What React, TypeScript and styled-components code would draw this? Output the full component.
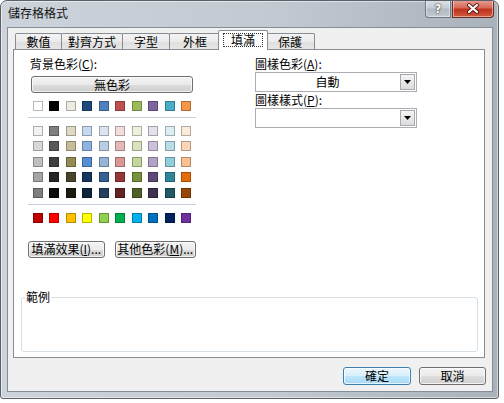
import React from "react";
import styled, { createGlobalStyle, css } from "styled-components";

const FONT = `"Noto Sans CJK TC", "Noto Sans", sans-serif`;

const GlobalStyle = createGlobalStyle`
  html, body { margin: 0; padding: 0; background: #fff; }
  body { font-family: ${FONT}; font-size: 12px; color: #000; }
  * { box-sizing: border-box; }
`;

const Window = styled.div`
  width: 499px;
  height: 399px;
  border: 1px solid #5b6168;
  border-radius: 7px 7px 3px 3px;
  background: linear-gradient(to right, #cdd3da 0%, #c2c9d1 55%, #a9b1ba 100%);
  box-shadow: inset 0 0 0 1px rgba(255, 255, 255, 0.5);
  display: flex;
  flex-direction: column;
  overflow: hidden;
`;

const TitleBar = styled.div`
  height: 26px;
  display: flex;
  align-items: flex-start;
  padding-left: 7px;
  padding-right: 4px;
`;

const Title = styled.div`
  line-height: 16px;
  padding-top: 4px;
  font-size: 12px;
  color: #111;
`;

const CaptionGroup = styled.div`
  margin-left: auto;
  margin-top: -1px;
  display: flex;
  gap: 1px;
`;

const CaptionBtn = styled.div<{ $w: number; $close?: boolean }>`
  width: ${(p) => p.$w}px;
  height: 18px;
  display: flex;
  align-items: center;
  justify-content: center;
  border: 1px solid ${(p) => (p.$close ? "#6d2a22" : "#6f7882")};
  border-top: none;
  border-radius: ${(p) => (p.$close ? "0 0 4px 0" : "0 0 0 4px")};
  background: ${(p) =>
    p.$close
      ? "linear-gradient(#e8a195 0%, #d66a58 45%, #c0331d 55%, #cf5a40 100%)"
      : "linear-gradient(#dfe3e8 0%, #c7cdd4 45%, #b1b9c2 55%, #c3c9d0 100%)"};
  box-shadow: inset 0 0 0 1px rgba(255, 255, 255, 0.45);
  color: #fff;
  font: bold 12px "DejaVu Sans", sans-serif;
  text-shadow: 0 0 2px #333, 0 0 1px #333;
`;

const Client = styled.div`
  flex: 1;
  margin: 0 5px 6px 6px;
  border: 1px solid #858d96;
  background: #f0f0f0;
  display: flex;
  flex-direction: column;
`;

const TabStrip = styled.div`
  height: 21px;
  display: flex;
  align-items: flex-end;
  padding-left: 7px;
`;

const Tab = styled.div<{ $w: number; $active?: boolean }>`
  position: relative;
  width: ${(p) => p.$w}px;
  height: 16px;
  margin-left: -1px;
  display: flex;
  align-items: center;
  justify-content: center;
  border: 1px solid #898c95;
  border-bottom: none;
  border-radius: 2px 2px 0 0;
  background: linear-gradient(#f3f3f3 0%, #ebebeb 50%, #dedede 51%, #e6e6e6 100%);
  line-height: 14px;
  &:first-child {
    margin-left: 0;
  }
  ${(p) =>
    p.$active &&
    css`
      z-index: 2;
      height: 20px;
      margin: 0 -2px -1px -3px;
      background: #fff;
      padding-bottom: 1px;
    `}
`;

const FocusLabel = styled.span`
  border: 1px dotted #333;
  padding: 0 7px;
  line-height: 12px;
`;

const Panel = styled.div`
  height: 309px;
  margin: 0 7px 0 5px;
  border: 1px solid #898c95;
  background: #fff;
  display: flex;
  flex-direction: column;
  padding: 6px 0 5px 0;
`;

const PanelTop = styled.div`
  display: flex;
  padding-left: 14px;
`;

const LeftCol = styled.div`
  width: 168px;
  display: flex;
  flex-direction: column;
`;

const RightCol = styled.div`
  width: 162px;
  margin-left: 59px;
  display: flex;
  flex-direction: column;
`;

const FieldLabel = styled.div<{ $indent?: number }>`
  line-height: 16px;
  height: 16px;
  padding-left: ${(p) => p.$indent ?? 0}px;
  white-space: nowrap;
`;

const PushButton = styled.div<{ $w: number; $ml?: number; $mt?: number }>`
  width: ${(p) => p.$w}px;
  height: 17px;
  margin-left: ${(p) => p.$ml ?? 0}px;
  margin-top: ${(p) => p.$mt ?? 0}px;
  border: 1px solid #707070;
  border-radius: 3px;
  background: linear-gradient(#f2f2f2 0%, #ebebeb 50%, #dddddd 51%, #cfcfcf 100%);
  box-shadow: inset 0 0 0 1px rgba(255, 255, 255, 0.7);
  display: flex;
  align-items: center;
  justify-content: center;
  line-height: 14px;
  white-space: nowrap;
`;

const SwatchGrid = styled.div<{ $mt: number }>`
  display: grid;
  grid-template-columns: repeat(10, 10px);
  column-gap: 6.44px;
  row-gap: 5.4px;
  padding-left: 5px;
  margin-top: ${(p) => p.$mt}px;
`;

const Swatch = styled.div<{ $c: string }>`
  width: 10px;
  height: 10px;
  background: ${(p) => p.$c};
  border: 1px solid rgba(0, 0, 0, 0.28);
`;

const Separator = styled.div<{ $mt: number }>`
  height: 1px;
  width: 168px;
  margin-top: ${(p) => p.$mt}px;
  background: #c5d0da;
`;

const ButtonRow = styled.div`
  display: flex;
  gap: 10px;
  margin-top: 18px;
`;

const Select = styled.div`
  width: 162px;
  height: 20px;
  border: 1px solid #abadb3;
  background: #fff;
  display: flex;
  align-items: stretch;
`;

const SelectText = styled.div`
  flex: 1;
  display: flex;
  align-items: center;
  justify-content: center;
  line-height: 14px;
`;

const DropButton = styled.div`
  width: 15px;
  margin: 1px;
  border: 1px solid #a7a9ae;
  background: linear-gradient(#f4f4f4, #dcdcdc);
  display: flex;
  align-items: center;
  justify-content: center;
`;

const GroupBox = styled.fieldset`
  margin: auto 6px 0 7px;
  padding: 0;
  height: 63px;
  border: 1px solid #d5dfe5;
  border-radius: 3px;
`;

const Legend = styled.legend`
  margin-left: 3px;
  padding: 0 1px;
  line-height: 16px;
  font-size: 12px;
`;

const Footer = styled.div`
  display: flex;
  justify-content: flex-end;
  gap: 8px;
  padding: 9px 6px 6px 0;
`;

const DialogButton = styled.div<{ $w: number; $default?: boolean }>`
  width: ${(p) => p.$w}px;
  height: 18px;
  border: 1px solid ${(p) => (p.$default ? "#3c7fb1" : "#707070")};
  border-radius: 3px;
  background: ${(p) =>
    p.$default
      ? "linear-gradient(#eaf6fd 0%, #d9f0fc 50%, #bee6fd 51%, #a7d9f5 100%)"
      : "linear-gradient(#f2f2f2 0%, #ebebeb 50%, #dddddd 51%, #cfcfcf 100%)"};
  box-shadow: inset 0 0 0 1px rgba(255, 255, 255, 0.7);
  display: flex;
  align-items: center;
  justify-content: center;
  line-height: 14px;
`;

const themeRow = ["#FFFFFF", "#000000", "#EEECE1", "#1F497D", "#4F81BD", "#C0504D", "#9BBB59", "#8064A2", "#4BACC6", "#F79646"];
const tintRows = [
  ["#F2F2F2", "#7F7F7F", "#DDD9C3", "#C6D9F0", "#DBE5F1", "#F2DCDB", "#EBF1DD", "#E5E0EC", "#DBEEF3", "#FDEADA"],
  ["#D8D8D8", "#595959", "#C4BD97", "#8DB3E2", "#B8CCE4", "#E5B9B7", "#D7E3BC", "#CCC1D9", "#B7DDE8", "#FBD5B5"],
  ["#BFBFBF", "#3F3F3F", "#938953", "#548DD4", "#95B3D7", "#D99694", "#C3D69B", "#B2A2C7", "#92CDDC", "#FAC08F"],
  ["#A5A5A5", "#262626", "#494429", "#17365D", "#366092", "#953734", "#76923C", "#5F497A", "#31859B", "#E36C09"],
  ["#7F7F7F", "#0C0C0C", "#1D1B10", "#0F243E", "#244061", "#632423", "#4F6128", "#3F3151", "#205867", "#974806"],
];
const standardRow = ["#C00000", "#FF0000", "#FFC000", "#FFFF00", "#92D050", "#00B050", "#00B0F0", "#0070C0", "#002060", "#7030A0"];

const tabs: { label: string; w: number; active?: boolean }[] = [
  { label: "數值", w: 47 },
  { label: "對齊方式", w: 62 },
  { label: "字型", w: 48 },
  { label: "外框", w: 52 },
  { label: "填滿", w: 50, active: true },
  { label: "保護", w: 50 },
];

const Arrow = () => (
  <svg width="7" height="4" viewBox="0 0 7 4">
    <path d="M0 0 H7 L3.5 4 Z" fill="#000" />
  </svg>
);

const CloseGlyph = () => (
  <svg width="14" height="11" viewBox="0 0 14 11">
    <path d="M3 2 L11 9 M11 2 L3 9" stroke="#5a1a12" strokeWidth="4" strokeLinecap="round" />
    <path d="M3 2 L11 9 M11 2 L3 9" stroke="#fff" strokeWidth="2.2" strokeLinecap="round" />
  </svg>
);

export default function App() {
  return (
    <>
      <GlobalStyle />
      <Window>
        <TitleBar>
          <Title>儲存格格式</Title>
          <CaptionGroup>
            <CaptionBtn $w={26}>?</CaptionBtn>
            <CaptionBtn $w={42} $close>
              <CloseGlyph />
            </CaptionBtn>
          </CaptionGroup>
        </TitleBar>
        <Client>
          <TabStrip>
            {tabs.map((t) => (
              <Tab key={t.label} $w={t.w} $active={t.active}>
                {t.active ? <FocusLabel>{t.label}</FocusLabel> : t.label}
              </Tab>
            ))}
          </TabStrip>
          <Panel>
            <PanelTop>
              <LeftCol>
                <FieldLabel $indent={2}>
                  背景色彩(<u>C</u>):
                </FieldLabel>
                <PushButton $w={162} $ml={3} $mt={4}>
                  無色彩
                </PushButton>
                <SwatchGrid $mt={8}>
                  {themeRow.map((c, i) => (
                    <Swatch key={i} $c={c} />
                  ))}
                </SwatchGrid>
                <Separator $mt={6} />
                <SwatchGrid $mt={8}>
                  {tintRows.flat().map((c, i) => (
                    <Swatch key={i} $c={c} />
                  ))}
                </SwatchGrid>
                <Separator $mt={6.4} />
                <SwatchGrid $mt={8}>
                  {standardRow.map((c, i) => (
                    <Swatch key={i} $c={c} />
                  ))}
                </SwatchGrid>
                <ButtonRow>
                  <PushButton $w={78}>
                    填滿效果(<u>I</u>)...
                  </PushButton>
                  <PushButton $w={83}>
                    其他色彩(<u>M</u>)...
                  </PushButton>
                </ButtonRow>
              </LeftCol>
              <RightCol>
                <FieldLabel>
                  圖樣色彩(<u>A</u>):
                </FieldLabel>
                <Select>
                  <SelectText>自動</SelectText>
                  <DropButton>
                    <Arrow />
                  </DropButton>
                </Select>
                <FieldLabel>
                  圖樣樣式(<u>P</u>):
                </FieldLabel>
                <Select>
                  <SelectText />
                  <DropButton>
                    <Arrow />
                  </DropButton>
                </Select>
              </RightCol>
            </PanelTop>
            <GroupBox>
              <Legend>範例</Legend>
            </GroupBox>
          </Panel>
          <Footer>
            <DialogButton $w={68} $default>
              確定
            </DialogButton>
            <DialogButton $w={67}>取消</DialogButton>
          </Footer>
        </Client>
      </Window>
    </>
  );
}
